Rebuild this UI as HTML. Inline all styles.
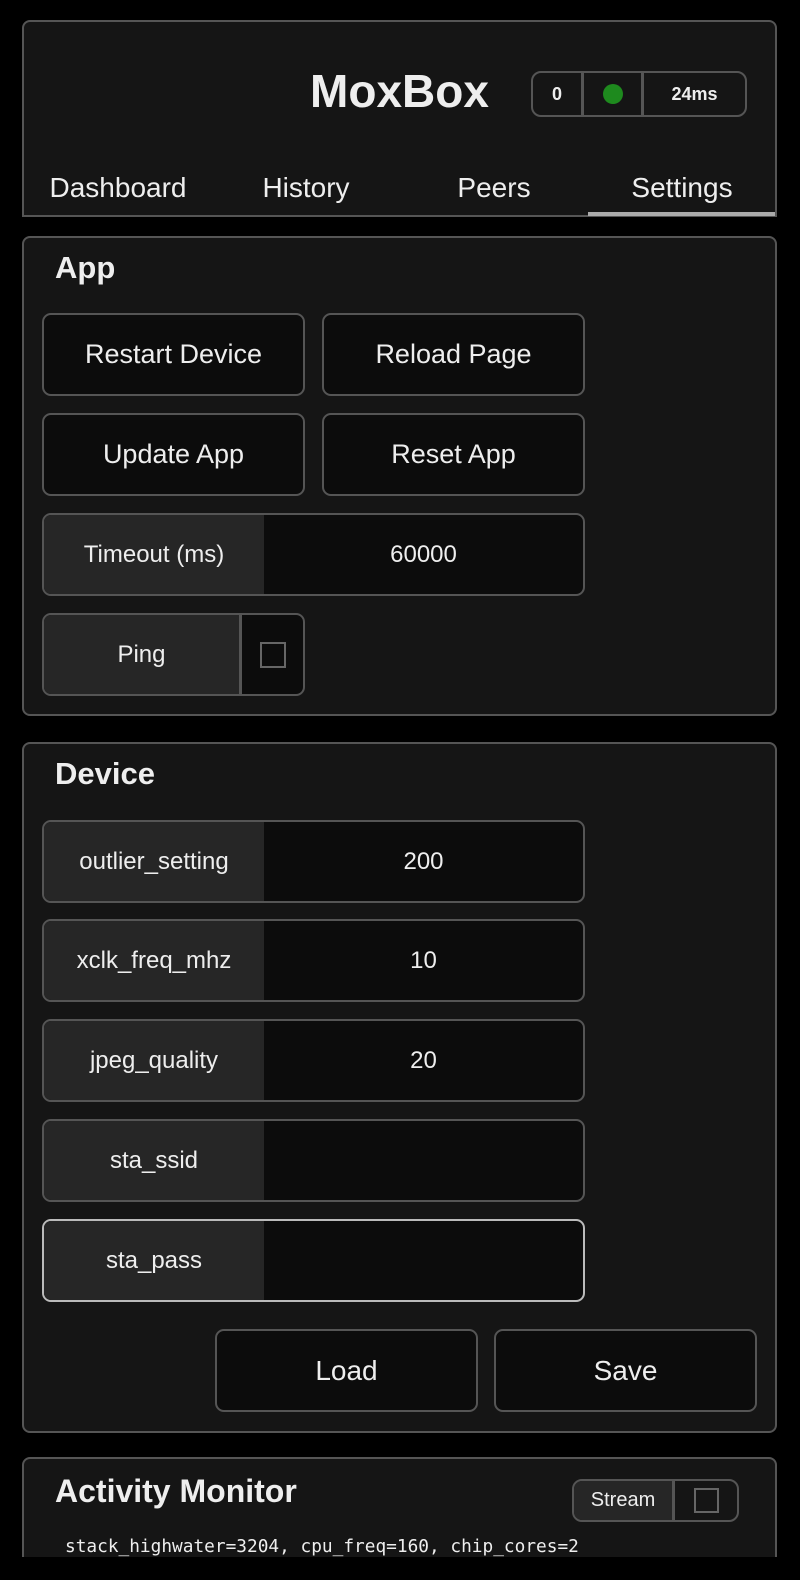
<!DOCTYPE html>
<html><head><style>
*{box-sizing:border-box;margin:0;padding:0}
html,body{width:800px;height:1580px;background:#000;overflow:hidden;font-family:"Liberation Sans",sans-serif;color:#eee}
#clip{position:absolute;left:0;top:0;width:800px;height:1557px;overflow:hidden}
.card{position:absolute;left:22px;width:755px;background:#151515;border:2px solid #555;border-radius:8px}
.a{position:absolute}
.btn{position:absolute;background:#0c0c0c;border:2px solid #555;border-radius:9px;display:flex;align-items:center;justify-content:center;font-size:27px;color:#eee}
.inp{position:absolute;left:42px;width:543px;height:83px;border:2px solid #555;border-radius:9px;background:#0c0c0c;overflow:hidden;font-size:24px}
.inp .l{position:absolute;left:0;top:0;bottom:0;width:220px;background:#262626;display:flex;align-items:center;justify-content:center}
.inp .v{position:absolute;left:220px;right:0;top:0;bottom:0;display:flex;align-items:center;justify-content:center}
h2{position:absolute;left:31px;font-size:31px;font-weight:bold}
.tab{position:absolute;top:150px;font-size:28px;text-align:center;width:188px}
</style></head><body><div id="clip">
<div class="card" style="top:20px;height:197px;border-radius:8px 8px 0 0">
 <div class="a" style="left:0;right:0;top:42px;text-align:center;font-size:46px;font-weight:bold">MoxBox</div>
 <div class="a" style="left:507px;top:49px;width:216px;height:46px;border:2px solid #555;border-radius:10px;display:flex;font-size:18px;font-weight:bold">
  <div style="width:51px;border-right:3px solid #555;display:flex;align-items:center;justify-content:center">0</div>
  <div style="width:60px;border-right:3px solid #555;display:flex;align-items:center;justify-content:center"><span style="width:20px;height:20px;border-radius:50%;background:#1e8a1e"></span></div>
  <div style="flex:1;display:flex;align-items:center;justify-content:center">24ms</div>
 </div>
 <div class="tab" style="left:0">Dashboard</div>
 <div class="tab" style="left:188px">History</div>
 <div class="tab" style="left:376px">Peers</div>
 <div class="tab" style="left:564px">Settings</div>
 <div class="a" style="left:564px;right:0;top:190px;height:4px;background:#aaa"></div>
</div>
<div class="card" style="top:236px;height:480px">
 <h2 style="top:12px">App</h2>
</div>
<div class="btn" style="left:42px;top:313px;width:263px;height:83px">Restart Device</div>
<div class="btn" style="left:322px;top:313px;width:263px;height:83px">Reload Page</div>
<div class="btn" style="left:42px;top:413px;width:263px;height:83px">Update App</div>
<div class="btn" style="left:322px;top:413px;width:263px;height:83px">Reset App</div>
<div class="inp" style="top:513px"><div class="l">Timeout (ms)</div><div class="v">60000</div></div>
<div class="inp" style="top:613px;width:263px"><div class="l" style="width:198px;border-right:3px solid #555">Ping</div><div class="v" style="left:198px"><span style="width:26px;height:26px;border:2px solid #666"></span></div></div>
<div class="card" style="top:742px;height:691px">
 <h2 style="top:12px">Device</h2>
</div>
<div class="inp" style="top:820px"><div class="l">outlier_setting</div><div class="v">200</div></div>
<div class="inp" style="top:919px"><div class="l">xclk_freq_mhz</div><div class="v">10</div></div>
<div class="inp" style="top:1019px"><div class="l">jpeg_quality</div><div class="v">20</div></div>
<div class="inp" style="top:1119px"><div class="l">sta_ssid</div><div class="v"></div></div>
<div class="inp" style="top:1219px;border-color:#bbb"><div class="l">sta_pass</div><div class="v"></div></div>
<div class="btn" style="left:215px;top:1329px;width:263px;height:83px;font-size:28px">Load</div>
<div class="btn" style="left:494px;top:1329px;width:263px;height:83px;font-size:28px">Save</div>
<div class="card" style="top:1457px;height:200px">
 <h2 style="top:14px;font-size:32px">Activity Monitor</h2>
 <div class="a" style="left:548px;top:20px;width:167px;height:43px;border:2px solid #555;border-radius:10px;background:#151515;overflow:hidden;display:flex;font-size:20px">
  <div style="width:101px;background:#262626;border-right:3px solid #555;display:flex;align-items:center;justify-content:center">Stream</div>
  <div style="flex:1;display:flex;align-items:center;justify-content:center"><span style="width:25px;height:25px;border:2px solid #666"></span></div>
 </div>
 <div class="a" style="left:41px;top:77px;font-family:'DejaVu Sans Mono','Liberation Mono',monospace;font-size:17.8px;white-space:pre">stack_highwater=3204, cpu_freq=160, chip_cores=2</div>
</div>
</div></body></html>
